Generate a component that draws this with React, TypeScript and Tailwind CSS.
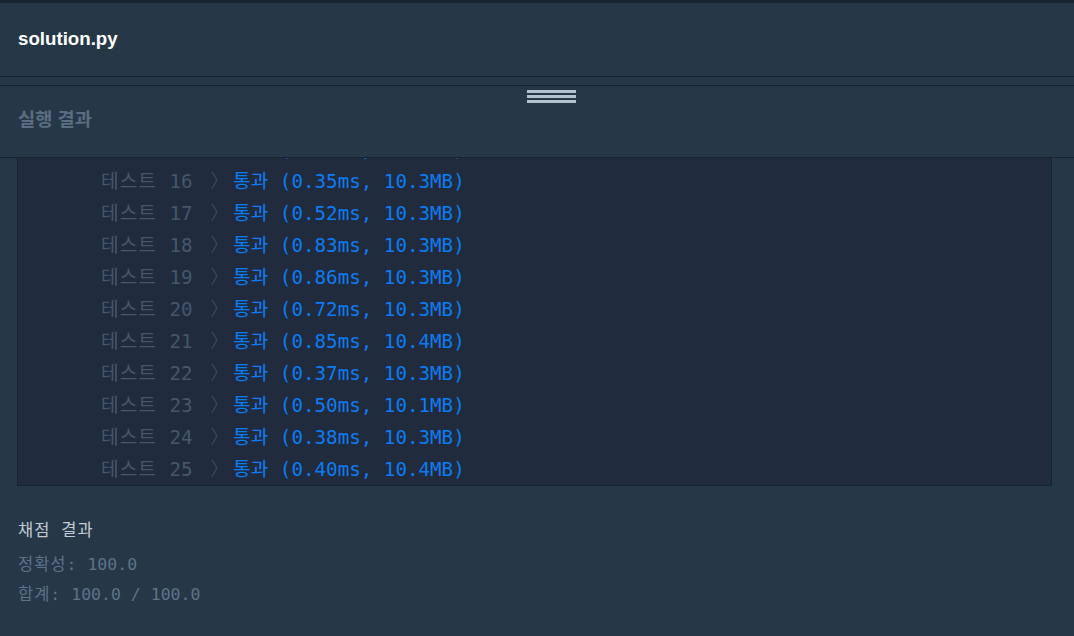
const results = [
  { n: 15, time: "0.41ms", mem: "10.3MB" },
  { n: 16, time: "0.35ms", mem: "10.3MB" },
  { n: 17, time: "0.52ms", mem: "10.3MB" },
  { n: 18, time: "0.83ms", mem: "10.3MB" },
  { n: 19, time: "0.86ms", mem: "10.3MB" },
  { n: 20, time: "0.72ms", mem: "10.3MB" },
  { n: 21, time: "0.85ms", mem: "10.4MB" },
  { n: 22, time: "0.37ms", mem: "10.3MB" },
  { n: 23, time: "0.50ms", mem: "10.1MB" },
  { n: 24, time: "0.38ms", mem: "10.3MB" },
  { n: 25, time: "0.40ms", mem: "10.4MB" },
]

const mono = "font-['DejaVu_Sans_Mono','Noto_Sans_CJK_KR',monospace]"

export default function App() {
  return (
    <div className="h-[636px] w-[1074px] overflow-hidden border-t-[3px] border-[#1a2431] bg-[#263747] font-['Liberation_Sans','Noto_Sans_CJK_KR',sans-serif]">
      <div className="flex h-[74px] items-center border-b border-[#172130] px-[18px]">
        <span className="text-[18.7px] font-bold text-white">solution.py</span>
      </div>
      <div className="h-[9px] border-b border-[#172130]" />

      <div className="relative flex h-[72px] items-center border-b border-[#1a2431] px-[18px] pb-[3px]">
        <div className="absolute left-[527px] top-[4px] flex w-[49px] flex-col gap-[2px]">
          <div className="h-[3px] bg-[#b4c2ce]" />
          <div className="h-[3px] bg-[#b4c2ce]" />
          <div className="h-[3px] bg-[#b4c2ce]" />
        </div>
        <span className="text-[18.7px] font-bold text-[#5a6e82]">실행 결과</span>
      </div>

      <div className="ml-[17px] mr-[22px] h-[328px] overflow-hidden border-x border-b border-[#1a2332] bg-[#202b3d]">
        <div className={`-mt-[24px] pl-[83px] text-[19.2px] leading-[32px] ${mono}`}>
          {results.map((r) => (
            <div key={r.n} className="flex whitespace-pre">
              <span className="w-[109px] text-[#44576c]">
                <span className="tracking-[1px]">테스트 </span>
                {r.n}
              </span>
              <span className="w-[23px] text-[#34465a]">〉</span>
              <span className="text-[#0d7cf2]">통과 ({r.time}, {r.mem})</span>
            </div>
          ))}
        </div>
      </div>

      <div className={`px-[18px] pt-[32px] text-[16.5px] ${mono}`}>
        <div className="leading-[26px] tracking-[1px] text-[#c3ccd5]">채점 결과</div>
        <div className="mt-[6px] whitespace-pre leading-[30px] text-[#5d7388]">
          <span className="tracking-[1px]">정확성:</span> 100.0
        </div>
        <div className="whitespace-pre leading-[30px] text-[#5d7388]">
          <span className="tracking-[1px]">합계:</span> 100.0 / 100.0
        </div>
      </div>
    </div>
  )
}
